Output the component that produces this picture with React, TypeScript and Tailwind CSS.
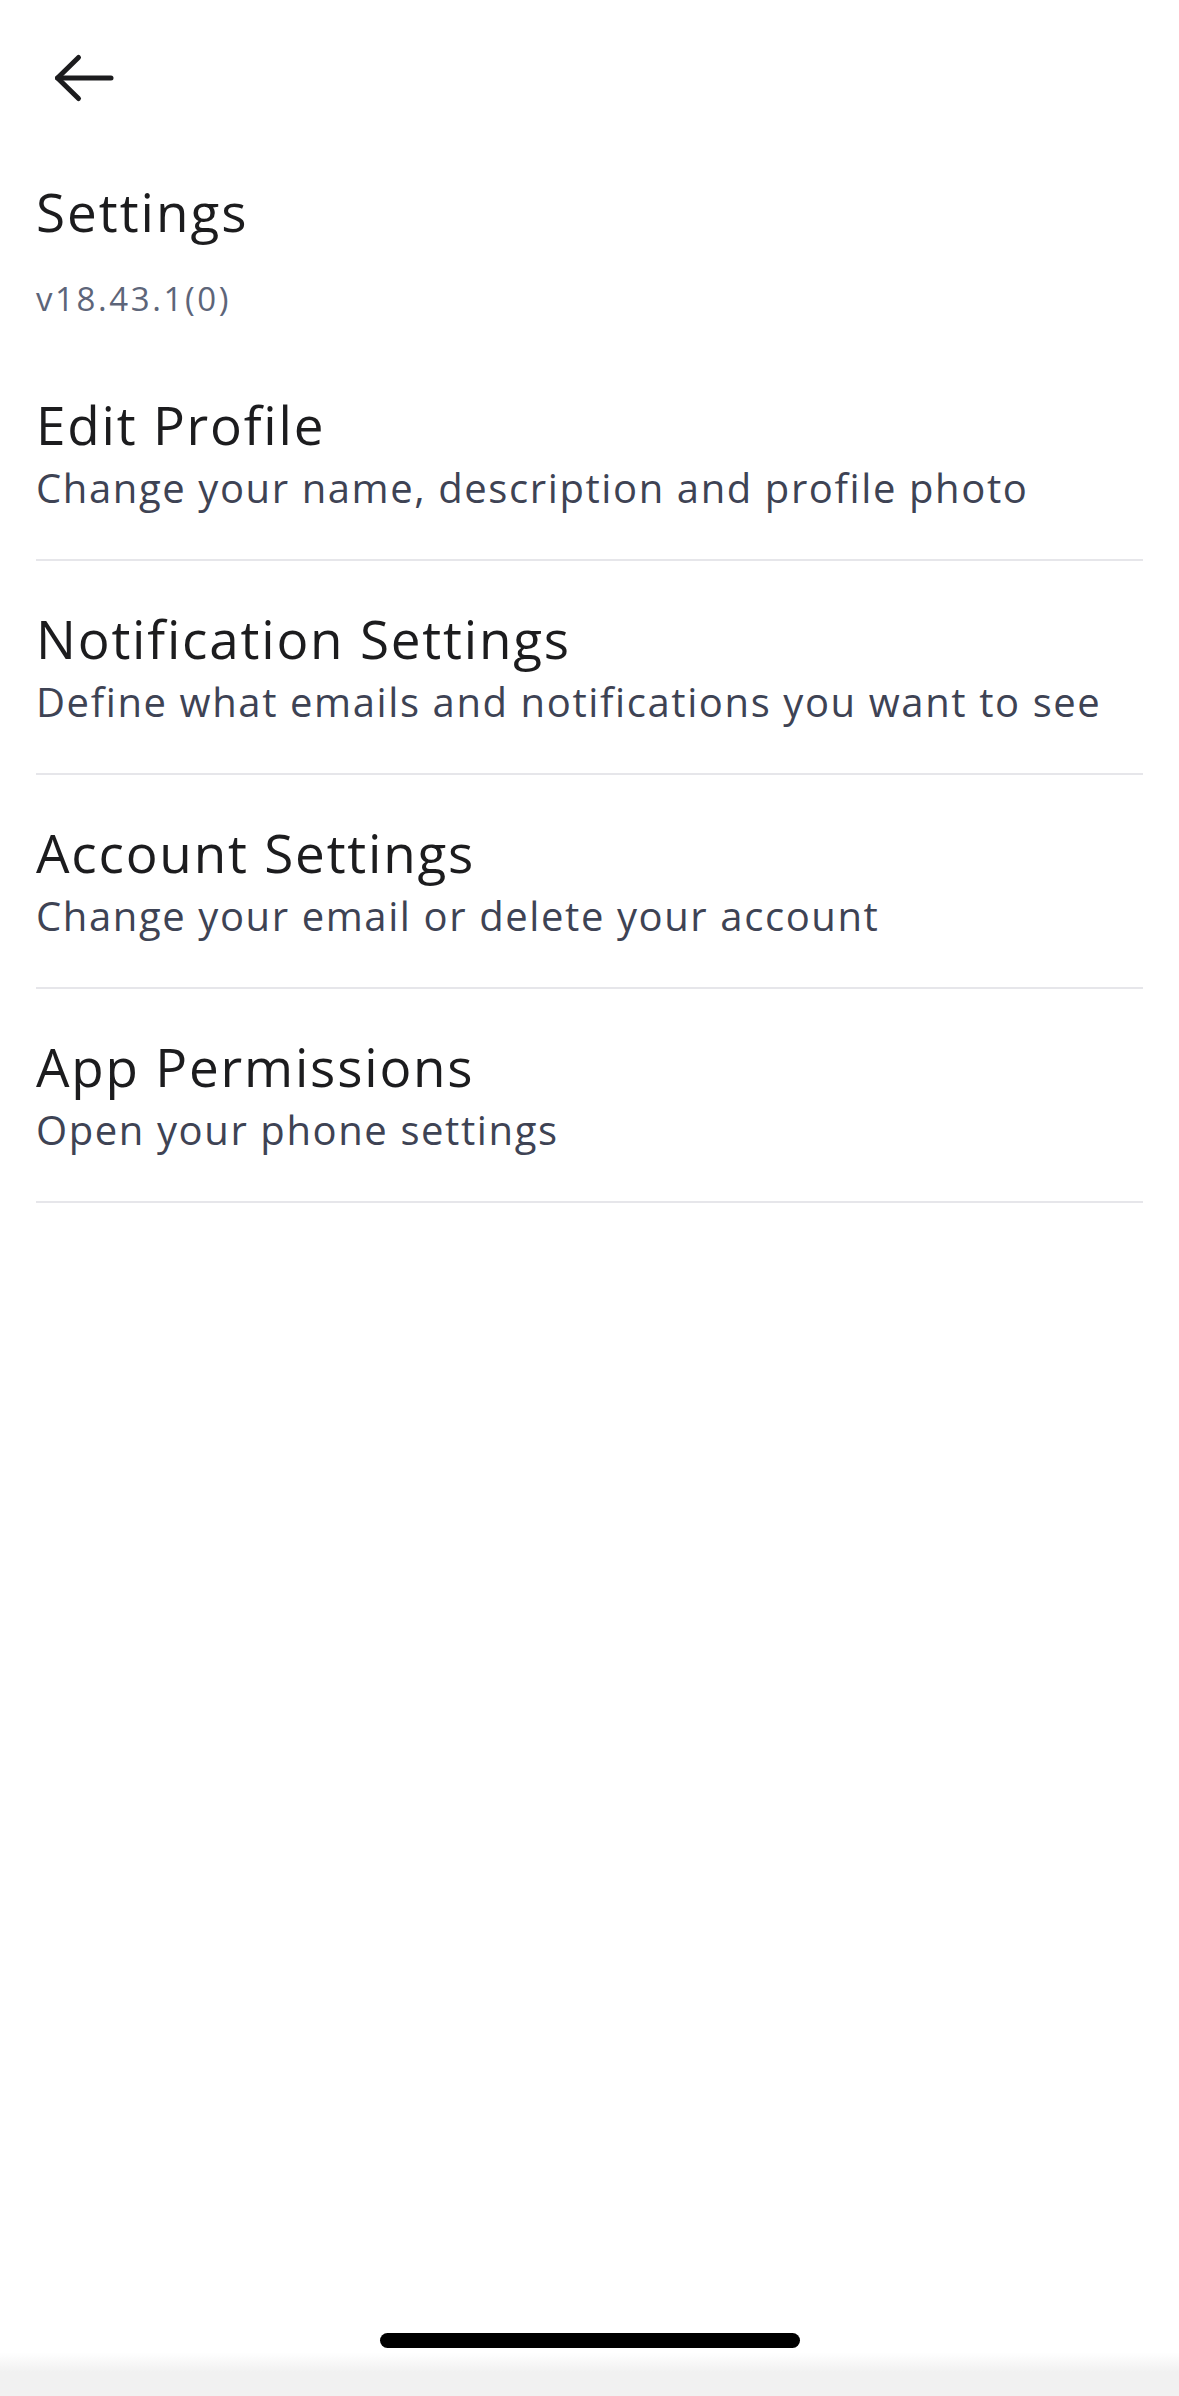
import React from "react";

const items = [
  { title: "Edit Profile", sub: "Change your name, description and profile photo" },
  { title: "Notification Settings", sub: "Define what emails and notifications you want to see" },
  { title: "Account Settings", sub: "Change your email or delete your account" },
  { title: "App Permissions", sub: "Open your phone settings" },
];

export default function App() {
  return (
    <div className="flex h-[2396px] w-[1179px] flex-col overflow-hidden bg-white font-['Open_Sans',sans-serif]">
      <div className="pl-[50px] pt-[50px]">
        <svg width="68" height="56" viewBox="0 0 68 56" fill="none" stroke="#1c1c1e" strokeWidth="5" strokeLinecap="round" strokeLinejoin="round">
          <path d="M7.5 28 L61 28" />
          <path d="M28.5 7.5 L7.5 28 L28.5 48.5" />
        </svg>
      </div>
      <div className="px-[36px]">
        <div className="mt-[74px] text-[53px] leading-[64px] tracking-[2px] text-[#1c1c1e]">Settings</div>
        <div className="mt-[35px] text-[33px] leading-[40px] tracking-[2.6px] text-[#5d6579]">v18.43.1(0)</div>
      </div>
      <div className="mt-[28px] px-[36px]">
        {items.map((it) => (
          <div key={it.title} className="border-b-2 border-[#e6e6ea] pb-[45px] pt-[46px]">
            <div className="text-[53px] leading-[64px] tracking-[1.8px] text-[#1c1c1e]">{it.title}</div>
            <div className="mt-[5px] text-[40px] leading-[52px] tracking-[1.6px] text-[#3e4354]">{it.sub}</div>
          </div>
        ))}
      </div>
      <div className="flex-1" />
      <div className="flex h-[39px] items-start justify-center bg-gradient-to-b from-white from-50% to-[#f1f1f1]">
        <div className="h-[15px] w-[420px] rounded-full bg-black" />
      </div>
      <div className="h-[24px] bg-[#f1f1f1]" />
    </div>
  );
}
